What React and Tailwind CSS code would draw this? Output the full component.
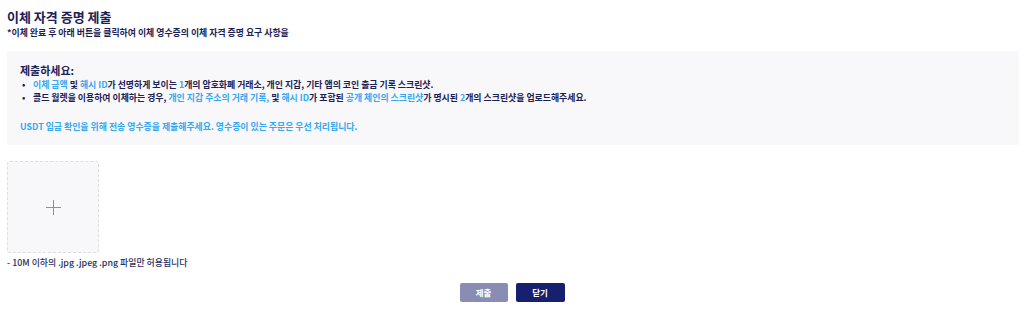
import React from "react";

const Blue = ({ children }) => <span className="text-[#35a8f0]">{children}</span>;

export default function App() {
  return (
    <div
      className="w-[1024px] h-[316px] bg-white text-[#1c2154] overflow-hidden"
      style={{ fontFamily: '"Noto Sans CJK KR", "Noto Sans", sans-serif' }}
    >
      <div className="pl-[7px] pr-[5px] pt-[9px]">
        <h1 className="text-[13px] font-bold leading-[16px]">이체 자격 증명 제출</h1>
        <p className="text-[8.9px] font-semibold leading-[12px] mt-[2px]">
          *이체 완료 후 아래 버튼을 클릭하여 이체 영수증의 이체 자격 증명 요구 사항을
        </p>

        {/* info box */}
        <div className="mt-[12px] bg-[#f8f8fb] h-[94px] pl-[13px] pt-[12px]">
          <div className="text-[11px] font-bold leading-[14px]">제출하세요:</div>
          <ul className="text-[8.9px] font-semibold leading-[13px] mt-[1px]">
            <li className="flex">
              <span className="w-[13px] pl-[2px]">•</span>
              <span>
                <Blue>이체 금액</Blue> 및 <Blue>해시 ID</Blue>가 선명하게 보이는 <Blue>1</Blue>개의 암호화폐 거래소, 개인 지갑, 기타 앱의 코인 출금 기록 스크린샷.
              </span>
            </li>
            <li className="flex">
              <span className="w-[13px] pl-[2px]">•</span>
              <span>
                콜드 월렛을 이용하여 이체하는 경우, <Blue>개인 지갑 주소의 거래 기록,</Blue> 및 <Blue>해시 ID</Blue>가 포함된 <Blue>공개 체인의 스크린샷</Blue>가 명시된 <Blue>2</Blue>개의 스크린샷을 업로드해주세요.
              </span>
            </li>
          </ul>
          <p className="mt-[17px] text-[8.9px] font-bold leading-[12px] text-[#35a8f0]">
            USDT 입금 확인을 위해 전송 영수증을 제출해주세요. 영수증이 있는 주문은 우선 처리됩니다.
          </p>
        </div>

        {/* upload */}
        <div className="mt-[16px] w-[92px] h-[92px] rounded-[3px] border border-dashed border-[#dcdde6] bg-[#f8f8fb] flex items-center justify-center">
          <svg width="15" height="15" viewBox="0 0 15 15" className="text-[#8d90a8]">
            <path d="M7.5 0v15M0 7.5h15" stroke="currentColor" strokeWidth="1" />
          </svg>
        </div>
        <p className="text-[8.9px] font-medium leading-[12px] mt-[4px] text-[#2a2f5e]">- 10M 이하의 .jpg .jpeg .png 파일만 허용됩니다</p>

        {/* buttons */}
        <div className="flex justify-center gap-[8px] mt-[14px] pr-[2px]">
          <button className="w-[48px] h-[19px] rounded-[2px] bg-[#8a8db3] text-white text-[8.5px] font-bold">제출</button>
          <button className="w-[49px] h-[19px] rounded-[2px] bg-[#16206e] text-white text-[8.5px] font-bold">닫기</button>
        </div>
      </div>
    </div>
  );
}
